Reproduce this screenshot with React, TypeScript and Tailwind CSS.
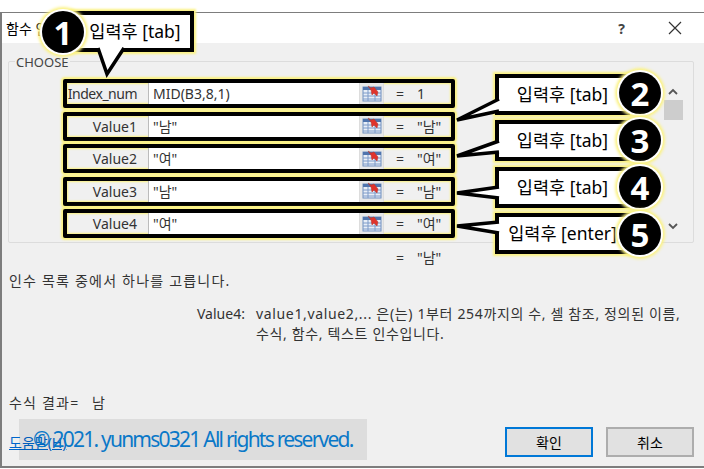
import React from 'react';

const ko = "font-['Noto_Sans','Noto_Sans_CJK_KR',sans-serif]";

const RefIcon = () => (
  <svg width="20" height="18" viewBox="0 0 20 18" className="shrink-0">
    <rect x="1" y="2" width="18" height="14" fill="#e8eef7" stroke="#6f8fc0" />
    <rect x="1" y="2" width="18" height="3" fill="#4f74ad" />
    <path d="M1 8h18M1 11h18M1 14h18M6 5v11M13 5v11" stroke="#7d9ac8" strokeWidth="1" fill="none" />
    <path d="M6 1l3 2 3-1 4 5-1 4-3-3-2 2-1-5z" fill="#e0332c" stroke="#b03a2e" strokeWidth=".5" />
  </svg>
);

const args = [
  { label: 'Index_num', input: 'MID(B3,8,1)', result: '1', labelClass: 'justify-end pr-[11px] tracking-[-0.5px]' },
  { label: 'Value1', input: '"남"', result: '"남"', labelClass: 'justify-end pr-[11px]' },
  { label: 'Value2', input: '"여"', result: '"여"', labelClass: 'justify-end pr-[11px]' },
  { label: 'Value3', input: '"남"', result: '"남"', labelClass: 'justify-end pr-[11px]' },
  { label: 'Value4', input: '"여"', result: '"여"', labelClass: 'justify-end pr-[11px]' },
];

const ArgRow = ({ label, input, result, labelClass }: typeof args[number]) => (
  <div className="flex h-[29px] w-[392px] items-stretch overflow-hidden rounded-[2px] border-[4px] border-black bg-[#f0f0f0] text-[14px] text-[#333] shadow-[0_0_2px_2px_#fbf283,inset_0_0_2px_1px_#fbf283]">
    <div className={`flex w-[82px] shrink-0 items-center border-r border-[#bbb] ${labelClass}`}>{label}</div>
    <div className="flex w-[210px] shrink-0 items-center bg-white pl-[4px]">{input}</div>
    <div className="flex w-[25px] shrink-0 items-center justify-center border-x border-[#ddd] bg-[#e8e8e8]"><RefIcon /></div>
    <div className="flex items-center pl-[12px]">
      <span className="w-[21px]">=</span>
      <span>{result}</span>
    </div>
  </div>
);

// callout box + numbered circle over the dialog
const CalloutBox = ({ boxClass, text }: { boxClass: string; text: string }) => (
  <div className={`absolute flex items-center justify-center border-[4px] border-black bg-white text-[17.5px] text-black shadow-[0_0_2px_2px_#fbf283] ${boxClass}`}>
    {text}
  </div>
);

const Badge = ({ circleClass, num }: { circleClass: string; num: string }) => (
  <div className={`absolute flex h-[42px] w-[42px] items-center justify-center rounded-full bg-black text-[33px] leading-none font-bold text-white shadow-[0_0_0_2px_#fff,0_0_3px_4px_#fbf283] ${circleClass}`}>
    {num}
  </div>
);

export default function App() {
  return (
    <div className={`relative h-[469px] w-[704px] overflow-hidden bg-white ${ko}`}>
      <div className="h-[12px]" />
      {/* dialog */}
      <div className="flex h-[456px] w-[704px] flex-col border-t border-b-2 border-l-2 border-[#7d7d7d] bg-[#f0f0f0] text-[14px] text-[#333]">
        <div className="flex h-[30px] shrink-0 items-center justify-between bg-white pr-[22px] pl-[4px] text-black">
          <span>함수 인수</span>
          <div className="flex items-center gap-[43px]">
            <span className="text-[14px] font-bold text-[#444]">?</span>
            <svg width="14" height="14" viewBox="0 0 14 14">
              <path d="M1 1l12 12M13 1L1 13" stroke="#333" strokeWidth="1.200" />
            </svg>
          </div>
        </div>

        {/* argument group */}
        <div className="relative mx-[6px] mt-[18px] h-[182px] w-[686px] shrink-0 rounded-[2px] border border-[#dcdcdc]">
          <span className="absolute top-[-9px] left-[6px] bg-[#f0f0f0] px-[1px] text-[13px] text-[#444]">CHOOSE</span>
          <div className="absolute top-0 right-[5px] bottom-0 flex w-[30px] flex-col items-center justify-between pt-[26px] pb-[12px]">
            <div className="flex flex-col items-center gap-[3px]">
              <svg width="10" height="7" viewBox="0 0 10 7"><path d="M1 6l4-4 4 4" stroke="#555" strokeWidth="1.800" fill="none" /></svg>
              <div className="mt-[2px] h-[20px] w-[19px] bg-[#cdcdcd]" />
            </div>
            <svg width="10" height="7" viewBox="0 0 10 7"><path d="M1 1l4 4 4-4" stroke="#555" strokeWidth="1.800" fill="none" /></svg>
          </div>
          <div className="ml-[54px] flex flex-col gap-[3.500px] pt-[17px]">
            {args.map((a) => <ArgRow key={a.label} {...a} />)}
          </div>
        </div>

        <div className="mt-[6px] pl-[394px] leading-[18px]"><span className="inline-block w-[21px]">=</span>"남"</div>
        <div className="mt-[5px] pl-[7px] leading-[18px] tracking-[1.200px]">인수 목록 중에서 하나를 고릅니다.</div>

        <div className="mt-[14px] flex leading-[20px]">
          <span className="w-[254px] pl-[195px]">Value4:</span>
          <span className="tracking-[0.650px]">value1,value2,... 은(는) 1부터 254까지의 수, 셀 참조, 정의된 이름,<br />수식, 함수, 텍스트 인수입니다.</span>
        </div>

        <div className="mt-[50px] flex pl-[7px] leading-[18px]">
          <span className="w-[83px] tracking-[1.200px]">수식 결과=</span>
          <span>남</span>
        </div>

        <div className="mt-[15px] flex items-center justify-between pr-[10px] pl-[7px]">
          <span className="text-[14px] text-[#0066cc] underline">도움말(H)</span>
          <div className="flex gap-[13px] text-black">
            <button className="h-[30px] w-[88px] border-2 border-[#0078d7] bg-[#e1e1e1]">확인</button>
            <button className="h-[30px] w-[88px] border-2 border-[#adadad] bg-[#e1e1e1]">취소</button>
          </div>
        </div>
      </div>

      {/* watermark */}
      <div className="absolute top-[419px] left-[19px] flex h-[41px] w-[348px] items-center bg-black/[0.08] pl-[14px] text-[21px] tracking-[-1.760px] whitespace-nowrap text-[#0a78c8]">
        © 2021. yunms0321 All rights reserved.
      </div>

      <CalloutBox text="입력후 [tab]" boxClass="top-[11px] left-[72px] h-[41px] w-[122px] pl-[4px]" />
      <CalloutBox text="입력후 [tab]" boxClass="top-[74px] left-[495px] h-[41px] w-[135px]" />
      <CalloutBox text="입력후 [tab]" boxClass="top-[120px] left-[495px] h-[41px] w-[135px]" />
      <CalloutBox text="입력후 [tab]" boxClass="top-[167px] left-[495px] h-[41px] w-[135px]" />
      <CalloutBox text="입력후 [enter]" boxClass="top-[213px] left-[495px] h-[41px] w-[135px]" />

      {/* callout tails, drawn over the box border so they open into the box */}
      <svg width="704" height="469" className="pointer-events-none absolute top-0 left-0">
        <g fill="#fff" stroke="#000" strokeWidth="3.500" strokeLinejoin="miter">
          <path d="M98 48L107 74L124 48" />
          <path d="M499 99L457 120L499 111" />
          <path d="M499 141L457 156L499 152" />
          <path d="M499 187L457 193L499 198" />
          <path d="M499 222L457 226L499 233" />
        </g>
      </svg>

      <Badge num="1" circleClass="top-[11px] left-[42px]" />
      <Badge num="2" circleClass="top-[72px] left-[619px]" />
      <Badge num="3" circleClass="top-[119px] left-[619px]" />
      <Badge num="4" circleClass="top-[166px] left-[619px]" />
      <Badge num="5" circleClass="top-[213px] left-[619px]" />
    </div>
  );
}
